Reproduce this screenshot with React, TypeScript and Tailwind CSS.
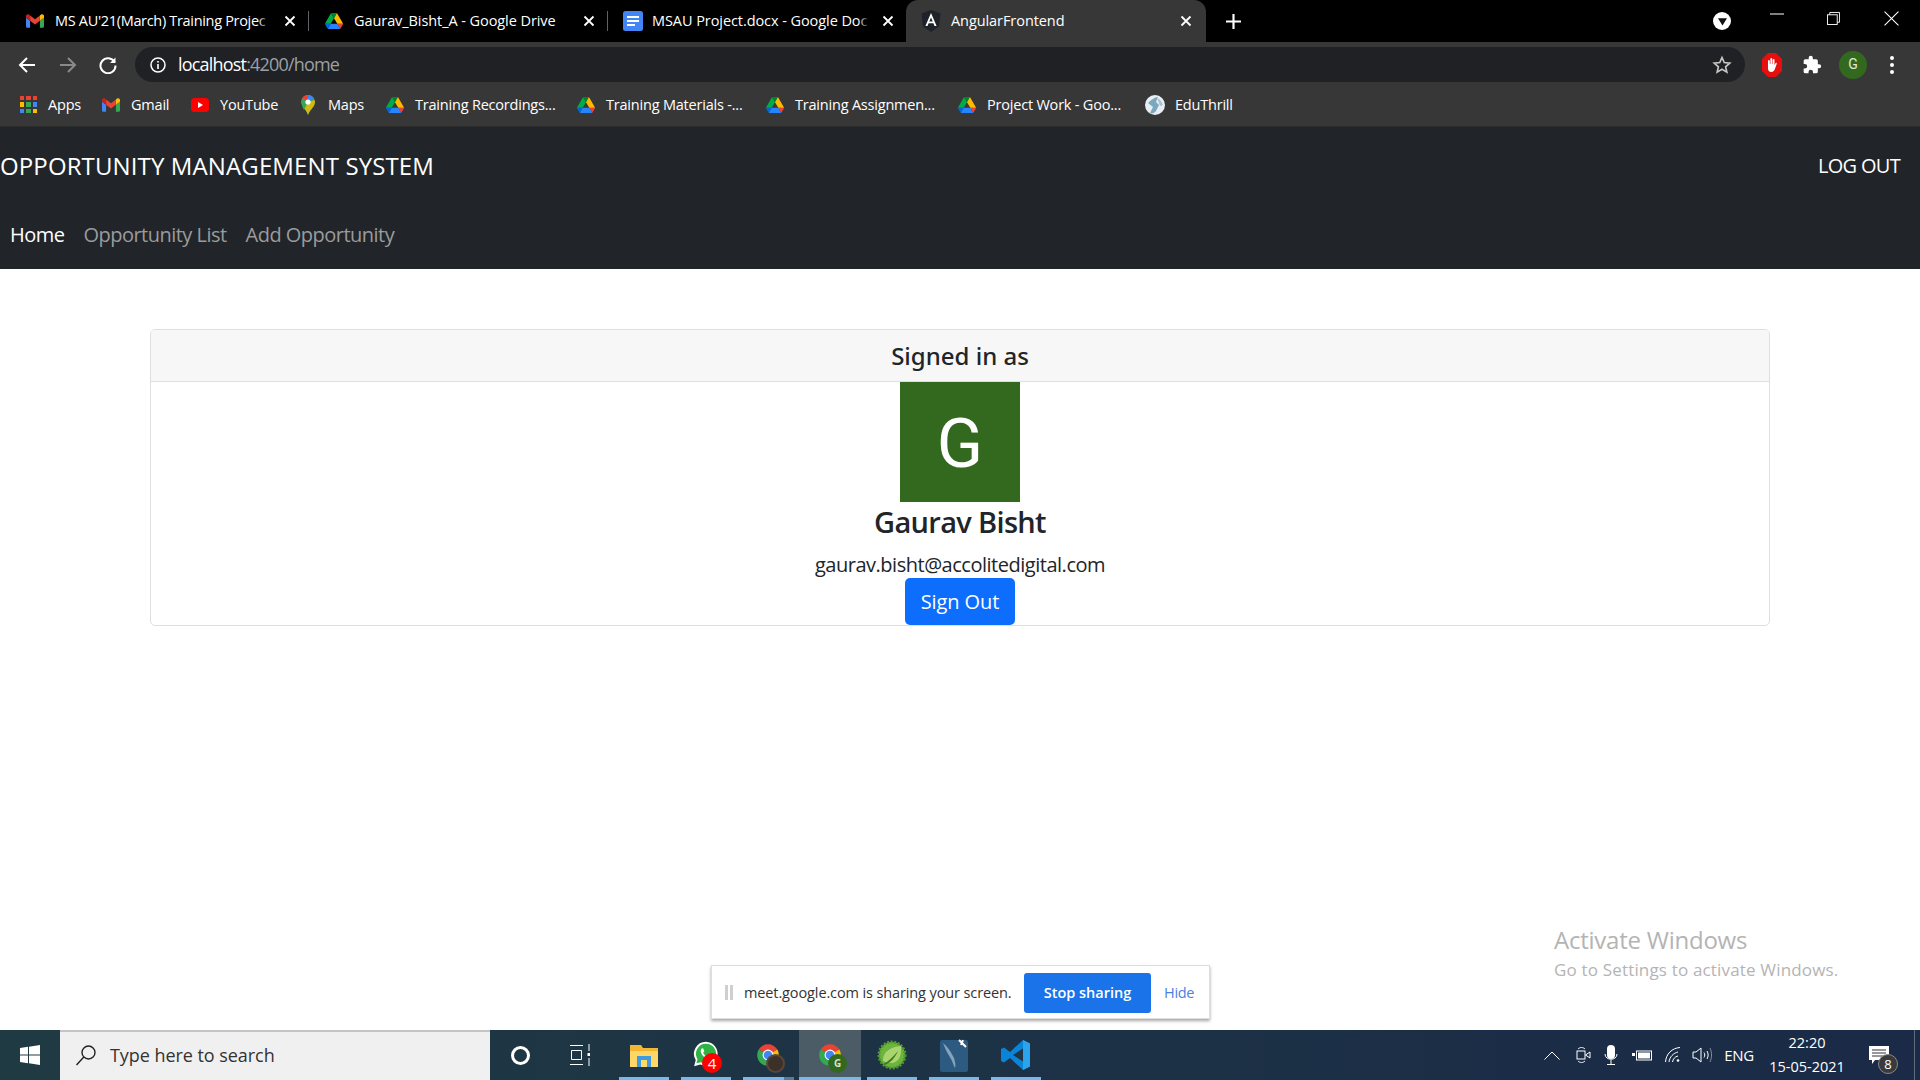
import React from "react";

const F = "font-['Open_Sans','Noto_Sans',sans-serif]";

function Drive({ className = "w-[18px] h-[16px]" }: { className?: string }) {
  return (
    <svg viewBox="0 0 87.3 78" className={className}>
      <path d="m6.6 66.85 3.85 6.65c.8 1.4 1.95 2.5 3.3 3.3l13.75-23.8h-27.5c0 1.55.4 3.1 1.2 4.5z" fill="#0066da" />
      <path d="m43.65 25-13.75-23.8c-1.35.8-2.5 1.9-3.3 3.3l-25.4 44a9.06 9.06 0 0 0 -1.2 4.5h27.5z" fill="#00ac47" />
      <path d="m73.55 76.8c1.35-.8 2.5-1.9 3.3-3.3l1.6-2.75 7.65-13.25c.8-1.4 1.2-2.95 1.2-4.5h-27.502l5.852 11.5z" fill="#ea4335" />
      <path d="m43.65 25 13.75-23.8c-1.35-.8-2.9-1.2-4.5-1.2h-18.5c-1.6 0-3.15.45-4.5 1.2z" fill="#00832d" />
      <path d="m59.8 53h-32.3l-13.75 23.8c1.35.8 2.9 1.2 4.5 1.2h50.8c1.6 0 3.15-.45 4.5-1.2z" fill="#2684fc" />
      <path d="m73.4 26.5-12.7-22c-.8-1.4-1.95-2.5-3.3-3.3l-13.75 23.8 16.15 28h27.45c0-1.55-.4-3.1-1.2-4.5z" fill="#ffba00" />
    </svg>
  );
}

function Gmail({ className = "w-[18px] h-[14px]" }: { className?: string }) {
  return (
    <svg viewBox="52 42 88 66" className={className}>
      <path fill="#4285f4" d="M58 108h14V74L52 59v43c0 3.32 2.69 6 6 6" />
      <path fill="#34a853" d="M120 108h14c3.32 0 6-2.69 6-6V59l-20 15" />
      <path fill="#fbbc04" d="M120 48v26l20-15v-8c0-7.42-8.47-11.65-14.4-7.2" />
      <path fill="#ea4335" d="M72 74V48l24 18 24-18v26L96 92" />
      <path fill="#c5221f" d="M52 51v8l20 15V48l-5.6-4.2c-5.94-4.45-14.4-.22-14.4 7.2" />
    </svg>
  );
}

function Docs() {
  return (
    <svg viewBox="0 0 20 20" className="w-5 h-5">
      <rect x="0" y="0" width="20" height="20" rx="2.5" fill="#4285f4" />
      <rect x="4" y="5" width="12" height="2" fill="#fff" />
      <rect x="4" y="9" width="12" height="2" fill="#fff" />
      <rect x="4" y="13" width="8" height="2" fill="#fff" />
    </svg>
  );
}

function Angular() {
  return (
    <svg viewBox="0 0 20 22" className="w-5 h-[22px]">
      <path d="M10 0 19.5 3.4 18 16.6 10 22 2 16.6.5 3.4z" fill="#1e2229" />
      <path d="M10 3 4.4 16h2.1l1.1-2.8h4.8l1.1 2.8h2.1L10 3zm0 4.6 1.7 4H8.3l1.7-4z" fill="#fff" />
    </svg>
  );
}

function Chrome({ badge }: { badge?: "photo" | "g" }) {
  return (
    <div className="relative w-[26px] h-[26px]">
      <svg viewBox="0 0 48 48" className="w-[26px] h-[26px]">
        <path d="M24 24 6.7 14A20 20 0 0 1 41.3 14z" fill="#ea4335" />
        <path d="M24 24 6.7 14A20 20 0 0 0 24 44z" fill="#34a853" />
        <path d="M24 24 41.3 14A20 20 0 0 1 24 44z" fill="#fbbc04" />
        <circle cx="24" cy="24" r="10" fill="#fff" />
        <circle cx="24" cy="24" r="8" fill="#4285f4" />
      </svg>
      {badge === "photo" && <div className="absolute left-[11px] top-[12px] w-[19px] h-[19px] rounded-full bg-[#3d3029] border-2 border-[#5a4638]" />}
      {badge === "g" && (
        <div className={`absolute left-[11px] top-[12px] w-[19px] h-[19px] rounded-full bg-[#33691e] flex items-center justify-center text-[10px] font-bold text-[#d5e3cc] ${F}`}>G</div>
      )}
    </div>
  );
}

const X = ({ c = "" }: { c?: string }) => (
  <svg viewBox="0 0 12 12" className={`w-3 h-3 ${c}`}>
    <path d="M1.5 1.5l9 9M10.5 1.5l-9 9" stroke="#fff" strokeWidth="1.8" />
  </svg>
);

const tabText = "whitespace-nowrap text-[14.5px] text-white";

function TabBar() {
  return (
    <div className="h-[42px] bg-black flex items-stretch shrink-0">
      <div className="w-[309px] flex items-center pl-[26px] relative">
        <Gmail />
        <span className={`ml-[11px] w-[215px] tracking-[-0.022em] ${tabText}`}>MS AU'21(March) Training Projec</span>
        <span className="absolute left-[258px] top-[9px] w-[12px] h-6 bg-linear-to-r from-transparent to-black" />
        <X c="ml-[14px]" />
        <span className="absolute right-0 top-[11px] h-[20px] w-px bg-[#5f6368]" />
      </div>
      <div className="w-[299px] flex items-center pl-[16px] relative">
        <Drive />
        <span className={`ml-[11px] w-[222px] tracking-[-0.005em] ${tabText}`}>Gaurav_Bisht_A - Google Drive</span>
        <X c="ml-[7px]" />
        <span className="absolute right-0 top-[11px] h-[20px] w-px bg-[#5f6368]" />
      </div>
      <div className="w-[298px] flex items-center pl-[15px] relative">
        <Docs />
        <span className={`ml-[9px] w-[218px] tracking-[-0.005em] ${tabText}`}>MSAU Project.docx - Google Doc</span>
        <span className="absolute left-[250px] top-[9px] w-[12px] h-6 bg-linear-to-r from-transparent to-black" />
        <X c="ml-[12px]" />
      </div>
      <div className="w-[300px] bg-[#373737] rounded-t-[12px] flex items-center pl-[15px] relative">
        <Angular />
        <span className={`ml-[10px] w-[229px] tracking-[-0.005em] ${tabText}`}>AngularFrontend</span>
        <X />
      </div>
      <div className="ml-[20px] flex items-center">
        <svg viewBox="0 0 14 14" className="w-[15px] h-[15px]"><path d="M7 0v14M0 7h14" stroke="#fff" strokeWidth="2" /></svg>
      </div>
      <div className="ml-auto flex items-center">
        <div className="w-[18px] h-[18px] rounded-full bg-white flex items-center justify-center mr-[39px]">
          <svg viewBox="0 0 10 10" className="w-[9px] h-[9px]"><path d="M0 1.5h10L5 9.5z" fill="#111" /></svg>
        </div>
        <svg viewBox="0 0 14 2" className="w-[14px] h-[2px] mr-[43px] -mt-[14px]"><path d="M0 1h14" stroke="#fff" strokeWidth="1" /></svg>
        <svg viewBox="0 0 14 14" className="w-[13px] h-[15px] mr-[44px] -mt-[6px]" fill="none" stroke="#fff" strokeWidth="1"><path d="M3 3V.5h10.5V11H11" /><rect x=".5" y="3" width="10.5" height="10.5" /></svg>
        <svg viewBox="0 0 14 14" className="w-[15px] h-[15px] mr-[21px] -mt-[6px]" fill="none" stroke="#fff" strokeWidth="1"><path d="M.5.5l13 13M13.5.5l-13 13" /></svg>
      </div>
    </div>
  );
}

function Toolbar() {
  return (
    <div className="h-[40px] bg-[#373737] flex items-start shrink-0">
      <div className="w-[135px] h-[35px] mt-[5px] flex items-center pl-[18px]">
        <svg viewBox="0 0 18 18" className="w-[18px] h-[18px]" fill="none" stroke="#fff" strokeWidth="2"><path d="M17 9H2M9 2 2 9l7 7" /></svg>
        <svg viewBox="0 0 18 18" className="w-[18px] h-[18px] ml-[23px]" fill="none" stroke="#8a8a8a" strokeWidth="2"><path d="M1 9h15M9 2l7 7-7 7" /></svg>
        <svg viewBox="0 0 18 18" className="w-[18px] h-[18px] ml-[22px]" fill="none" stroke="#fff" strokeWidth="2"><path d="M15.5 6A7.5 7.5 0 1 0 16.500 9.500" /><path d="M16.500 1.500v5.500h-5.500" fill="#fff" stroke="none" /></svg>
      </div>
      <div className="w-[1610px] h-[35px] mt-[5px] rounded-full bg-[#202124] flex items-center pl-[15px] pr-[13px]">
        <svg viewBox="0 0 16 16" className="w-[16px] h-[16px]" fill="none"><circle cx="8" cy="8" r="7" stroke="#fff" strokeWidth="1.500" /><rect x="7.200" y="7" width="1.600" height="5" fill="#fff" /><rect x="7.200" y="4" width="1.600" height="1.600" fill="#fff" /></svg>
        <span className="ml-[12px] text-[18px] tracking-[-0.045em] text-white">localhost<span className="text-[#9aa0a6]">:4200/home</span></span>
        <svg viewBox="0 0 24 24" className="w-[20px] h-[20px] ml-auto" fill="none" stroke="#c4c7c5" strokeWidth="2"><path d="M12 3l2.700 6.100 6.600.6-5 4.400 1.500 6.500L12 17.200l-5.800 3.400 1.500-6.500-5-4.400 6.600-.6z" /></svg>
      </div>
      <div className="flex-1 h-[35px] mt-[5px] flex items-center">
        <svg viewBox="0 0 20 24" className="w-[20px] h-[24px] ml-[17px]"><path d="M6 0h8l6 6v12l-6 6H6l-6-6V6z" fill="#e60f0f" /><path d="M6 13V7.500a1 1 0 0 1 1.800 0V11h.6V5.500a1 1 0 0 1 1.800 0V11h.5V6.500a1 1 0 0 1 1.800 0V12l1-1.800c.6-.8 1.700 0 1.200.8l-2 5.500c-.6 1.500-1.600 2.500-3.400 2.500-2.200 0-3.300-1.500-3.300-3.500z" fill="#fff" /></svg>
        <svg viewBox="0 0 24 24" className="w-[20px] h-[20px] ml-[20px]" fill="#fff"><path d="M20.500 11H19V7a2 2 0 0 0-2-2h-4V3.500a2.500 2.500 0 0 0-5 0V5H4a2 2 0 0 0-2 2v3.800h1.500a2.700 2.700 0 0 1 0 5.400H2V20a2 2 0 0 0 2 2h3.800v-1.500a2.700 2.700 0 0 1 5.400 0V22H17a2 2 0 0 0 2-2v-4h1.500a2.500 2.500 0 0 0 0-5z" /></svg>
        <div className="w-[28px] h-[28px] ml-[17px] rounded-full bg-[#33691e] flex items-center justify-center text-[14px] text-[#dfe9d8] font-['Roboto',sans-serif]">G</div>
        <svg viewBox="0 0 4 18" className="w-[4px] h-[18px] ml-[23px]" fill="#fff"><circle cx="2" cy="2" r="2" /><circle cx="2" cy="9" r="2" /><circle cx="2" cy="16" r="2" /></svg>
      </div>
    </div>
  );
}

function Bm({ icon, label, w, gap = "w-[29px]" }: { icon: React.ReactNode; label: string; w: string; gap?: string }) {
  return (
    <div className={`flex items-center shrink-0 ${w}`}>
      <span className={`flex items-center ${gap}`}>{icon}</span>
      <span className="text-[14.5px] tracking-[-0.014em] text-white whitespace-nowrap">{label}</span>
    </div>
  );
}

function Bookmarks() {
  const apps = ["#ea4335", "#ea4335", "#ea4335", "#fbbc04", "#34a853", "#4285f4", "#4285f4", "#34a853", "#fbbc04"];
  return (
    <div className="h-[45px] bg-[#373737] flex items-center shrink-0 pl-[20px] pt-[1px] border-b border-[#2c2c2c]">
      <Bm w="w-[82px]" gap="w-[28px]" label="Apps" icon={
        <div className="grid grid-cols-3 gap-[2px] w-[17px]">
          {apps.map((c, i) => <span key={i} className="w-[4.300px] h-[4.300px]" style={{ background: c }} />)}
        </div>
      } />
      <Bm w="w-[89px]" label="Gmail" icon={<Gmail />} />
      <Bm w="w-[110px]" label="YouTube" icon={
        <svg viewBox="0 0 18 14" className="w-[18px] h-[14px]"><rect width="18" height="14" rx="3.500" fill="#f00" /><path d="M7 4l5 3-5 3z" fill="#fff" /></svg>
      } />
      <Bm w="w-[85px]" gap="w-[27px]" label="Maps" icon={
        <svg viewBox="0 0 14 20" className="w-[14px] h-[20px]"><path d="M7 0a7 7 0 0 0-7 7c0 4.500 5 7 7 13 2-6 7-8.500 7-13a7 7 0 0 0-7-7z" fill="#34a853" /><path d="M7 0a7 7 0 0 1 6 3.500L7 7z" fill="#4285f4" /><path d="M1 3.500A7 7 0 0 1 7 0v7z" fill="#ea4335" /><path d="M13.500 5 7 7 2 12c2 2.500 4 4 5 8 1.500-5 7-8 7-13z" fill="#fbbc04" opacity=".8" /><path d="M1 11 7 7 3 15z" fill="#34a853" /><circle cx="7" cy="7" r="2.600" fill="#fff" /></svg>
      } />
      <Bm w="w-[191px]" label="Training Recordings..." icon={<Drive />} />
      <Bm w="w-[189px]" label="Training Materials -..." icon={<Drive />} />
      <Bm w="w-[192px]" label="Training Assignmen..." icon={<Drive />} />
      <Bm w="w-[187px]" label="Project Work - Goo..." icon={<Drive />} />
      <Bm w="w-[100px]" gap="w-[30px]" label="EduThrill" icon={
        <svg viewBox="0 0 20 20" className="w-[20px] h-[20px]"><circle cx="10" cy="10" r="10" fill="#e8eef2" /><path d="M3 8c3-3 7-6 10-6l-2 5 3 3-3 6c-1 2-5 3-6 2l3-6z" fill="#7ba7bf" /><path d="M12 3c3 1 5 4 6 7l-3 1z" fill="#a9c4d4" /></svg>
      } />
    </div>
  );
}

function Navbar() {
  return (
    <nav className="h-[142px] bg-[#212529] shrink-0 flex flex-col">
      <div className="h-[57px] flex items-end justify-between pr-[20px]">
        <span className="text-[24px] leading-[36px] tracking-[0.005em] text-white">OPPORTUNITY MANAGEMENT SYSTEM</span>
        <span className="text-[20px] leading-[36px] tracking-[-0.035em] text-white">LOG OUT</span>
      </div>
      <div className="flex gap-[19px] pl-[10px] mt-[35px] text-[20px] leading-[32px] tracking-[-0.026em]">
        <span className="text-white">Home</span>
        <span className="text-[#9a9b9d]">Opportunity List</span>
        <span className="text-[#9a9b9d]">Add Opportunity</span>
      </div>
    </nav>
  );
}

function Card() {
  return (
    <main className="flex-1 bg-white pt-[60px] px-[150px] text-[#212529]">
      <div className="border border-[#dfdfdf] rounded-[5px] overflow-hidden h-[297px]">
        <div className="h-[52px] bg-[#f7f7f7] border-b border-[#dfdfdf] flex items-center justify-center text-[24px] font-medium font-['Noto_Sans',sans-serif]">Signed in as</div>
        <div className="flex flex-col items-center">
          <div className="w-[120px] h-[120px] pt-[4px] bg-[#33691e] flex items-center justify-center text-white text-[68px] font-['Roboto',sans-serif]">G</div>
          <div className="h-[39px] flex items-center text-[29px] font-semibold tracking-[-0.023em] leading-none">Gaurav Bisht</div>
          <div className="h-[37px] pt-[10px] flex items-center text-[20px] tracking-[-0.024em]">gaurav.bisht@accolitedigital.com</div>
          <button className="w-[110px] h-[47px] rounded-[5px] bg-[#0d6efd] text-white text-[20px] tracking-[-0.005em]">Sign Out</button>
        </div>
      </div>
    </main>
  );
}

function Slot({ children, active, line, stack, narrow }: { children: React.ReactNode; active?: boolean; line?: boolean; stack?: boolean; narrow?: boolean }) {
  return (
    <div className={`${narrow ? "w-[61px]" : "w-[62px]"} h-[50px] relative flex items-center justify-center ${active ? "bg-[#4b5c66]" : ""}`}>
      {children}
      {line && <span className={`absolute bottom-0 h-[3px] bg-[#76b9ed] ${active ? "left-0 right-0" : "left-[6px] right-[6px]"}`} />}
      {stack && <span className="absolute bottom-0 right-[5px] h-[3px] w-[10px] bg-[#4f7f9f]" />}
    </div>
  );
}

function Taskbar() {
  return (
    <div className="h-[50px] shrink-0 flex items-stretch bg-linear-to-r from-[#203a43] to-[#1a2a47]">
      <div className="w-[60px] flex items-center justify-center">
        <svg viewBox="0 0 20 20" className="w-[20px] h-[20px]" fill="#fff"><path d="M0 3l8-1.200v7.700H0zM9 1.700 20 0v9.500H9zM0 10.500h8v7.700L0 17zM9 10.500h11V20L9 18.300z" /></svg>
      </div>
      <div className="w-[430px] bg-[#f0f0f0] border-t-2 border-[#c4c4c4] flex items-center pl-[15px] pb-[2px]">
        <svg viewBox="0 0 22 22" className="w-[22px] h-[22px]" fill="none" stroke="#222" strokeWidth="1.400"><circle cx="13.500" cy="8.500" r="6.500" /><path d="M8.800 13 1.500 21" /></svg>
        <span className="ml-[13px] text-[18px] tracking-[-0.003em] text-[#333]">Type here to search</span>
      </div>
      <Slot narrow><span className="w-[19px] h-[19px] rounded-full border-[3px] border-white" /></Slot>
      <Slot>
        <svg viewBox="0 0 20 24" className="w-[20px] h-[24px] -ml-[4px]" fill="none" stroke="#fff" strokeWidth="1"><path d="M0 2.500h13M0 21.500h13M1.500 7.500h10v9h-10z" /><path d="M19 1v7M19 15v8" /><rect x="17.500" y="10" width="3" height="3" fill="#fff" stroke="none" /></svg>
      </Slot>
      <Slot line>
        <svg viewBox="0 0 28 24" className="w-[28px] h-[24px]"><path d="M0 2h11l2 3h15v19H0z" fill="#f2b632" /><rect x="0" y="8" width="28" height="16" fill="#ffd766" /><rect x="7" y="13" width="14" height="11" fill="#3f9be0" /><rect x="11" y="17" width="6" height="7" fill="#ffd766" /></svg>
      </Slot>
      <Slot line>
        <div className="relative w-[28px] h-[30px]">
          <svg viewBox="0 0 24 24" className="w-[28px] h-[28px]">
            <path d="M12 1.500a10.300 10.300 0 0 0-8.800 15.700L1.800 22.500l5.400-1.400A10.300 10.300 0 1 0 12 1.500z" fill="#fff" />
            <path d="M12 3.200a8.600 8.600 0 0 0-7.300 13.200l-.9 3.600 3.700-.9A8.600 8.600 0 1 0 12 3.200z" fill="#2fb344" />
            <path d="M8.700 7.200c-.4 0-1 .5-1.200 1.300-.4 1.900 1 4.100 2.700 5.800s3.900 2.900 5.600 2.400c.8-.3 1.300-.9 1.300-1.500l-.1-.8-2.500-1.200-1.200 1.400c-1.700-.7-3-2-3.800-3.800l1.100-1.200-1.100-2.500z" fill="#fff" />
          </svg>
          <span className={`absolute left-[10px] top-[13px] w-[20px] h-[20px] rounded-full bg-[#f00] text-white text-[15px] leading-[20px] text-center ${F}`}>4</span>
        </div>
      </Slot>
      <Slot line stack><Chrome badge="photo" /></Slot>
      <Slot line active><Chrome badge="g" /></Slot>
      <Slot line>
        <svg viewBox="0 0 30 30" className="w-[30px] h-[30px]">
          <circle cx="15" cy="15" r="13" fill="#6db33f" stroke="#4f9a2a" strokeWidth="3" strokeDasharray="2 1.500" />
          <path d="M6 21C6 11 14 7 24 6c1 9-2 17-10 17-3 0-5-1-8-2z" fill="#a8d56e" />
          <path d="M6 24c5-2 10-7 15-13-3 7-8 12-13 14z" fill="#3c7a1e" />
        </svg>
      </Slot>
      <Slot line>
        <svg viewBox="0 0 28 34" className="w-[28px] h-[34px]">
          <rect x="0" y="2" width="28" height="32" rx="2" fill="#2c5a80" />
          <path d="M3 5c5 4 8 9 11 15 1 4 2 7 1 10-2-3-2-6-4-9-3-5-6-10-8-16z" fill="#cfe0ec" opacity=".55" />
          <path d="M19 2l7 7M23 2l-2 5" stroke="#fff" strokeWidth="2" />
        </svg>
      </Slot>
      <Slot line>
        <svg viewBox="0 0 32 32" className="w-[32px] h-[32px]">
          <path d="M23 1 30 4.500v23L23 31 10 19l-6 4.500-3-1.500v-12l3-1.500 6 4.500z" fill="#0a84d6" />
          <path d="M23 9.500 13 16l10 6.500z" fill="#1f3445" />
          <path d="M23 1 30 4.500v23L23 31z" fill="#2ba4ee" />
        </svg>
      </Slot>
      <div className="flex-1 flex items-center justify-end text-white">
        <svg viewBox="0 0 16 9" className="w-[16px] h-[9px] mr-[16px]" fill="none" stroke="#fff" strokeWidth="1"><path d="M.5 8.500 8 1l7.500 7.500" /></svg>
        <svg viewBox="0 0 15 18" className="w-[15px] h-[18px] mr-[13px]" fill="none" stroke="#fff" strokeWidth="1"><path d="M2 3c2-2 5-2 7 0M2 15c2 2 5 2 7 0" /><rect x="1" y="5" width="8" height="8" /><path d="M9.500 9 14 6v6z" /></svg>
        <svg viewBox="0 0 14 20" className="w-[14px] h-[20px] mr-[14px]"><rect x="3" y="0" width="8" height="14" rx="4" fill="#fff" /><path d="M1 9c0 7 12 7 12 0M7 15v4M3 19.500h8" fill="none" stroke="#fff" /></svg>
        <svg viewBox="0 0 20 12" className="w-[20px] h-[12px] mr-[13px]"><rect x="4.500" y="2" width="15" height="9" fill="none" stroke="#fff" /><rect x="6" y="3.500" width="12" height="6" fill="#fff" /><path d="M0 4h3v3H0z" fill="#fff" /></svg>
        <svg viewBox="0 0 16 16" className="w-[16px] h-[16px] mr-[11px]" fill="none" stroke="#fff" strokeWidth="1"><path d="M.5 15C1 7 7 1 15 .5M4 15c.5-5 4.500-9 9-10M7.500 15c.5-3 2.500-5.500 5.500-6" /><circle cx="13" cy="13.500" r="1.300" fill="#fff" stroke="none" /></svg>
        <svg viewBox="0 0 20 18" className="w-[20px] h-[18px] mr-[12px]" fill="none" stroke="#fff" strokeWidth="1"><path d="M1 6h3l5-4v14l-5-4H1zM12 6.500c1 1.500 1 3.500 0 5M15 5c1.500 2.500 1.500 5.500 0 8" /><path d="M18 2c2 4 2 10 0 14" stroke="#8a8f99" /></svg>
        <span className="text-[15px] tracking-[-0.015em] mr-[13px]">ENG</span>
        <div className="w-[80px] text-center text-[14.5px] leading-[24px] mr-[22px]">
          <div>22:20</div>
          <div>15-05-2021</div>
        </div>
        <div className="relative w-[20px] h-[18px] mr-[25px]">
          <svg viewBox="0 0 20 18" className="w-[20px] h-[18px]"><path d="M0 0h20v14H6l-3 4v-4H0z" fill="#fff" /><path d="M3 4h14M3 7h14M3 10h14" stroke="#333" strokeWidth="1" /></svg>
          <span className={`absolute left-[9px] top-[8px] w-[20px] h-[20px] rounded-full bg-[#3a3a3a] border border-[#888] text-white text-[13px] leading-[18px] text-center ${F}`}>8</span>
        </div>
        <span className="w-px h-[50px] bg-[#5f6b78] mr-[5px]" />
      </div>
    </div>
  );
}

export default function App() {
  return (
    <div className={`relative w-[1920px] h-[1080px] overflow-hidden flex flex-col bg-white ${F}`}>
      <TabBar />
      <Toolbar />
      <Bookmarks />
      <Navbar />
      <Card />
      <Taskbar />
      <div className="absolute left-[1554px] top-[924px] text-[#b4b4b4]">
        <div className="text-[24px] leading-[32px] tracking-[-0.01em]">Activate Windows</div>
        <div className="text-[17px] leading-[27px] tracking-[0.01em]">Go to Settings to activate Windows.</div>
      </div>
      <div className="absolute left-[711px] top-[965px] w-[499px] h-[54px] bg-white border border-[#dedede] shadow-[0_2px_3px_rgba(0,0,0,0.35)] flex items-center pl-[13px] pt-[1px]">
        <span className="w-[3px] h-[15px] bg-[#cfcfcf]" />
        <span className="w-[3px] h-[15px] bg-[#cfcfcf] ml-[2px]" />
        <span className="ml-[11px] text-[14.5px] tracking-[-0.008em] text-[#333] whitespace-nowrap w-[280px]">meet.google.com is sharing your screen.</span>
        <button className="w-[127px] h-[40px] rounded-[3px] bg-[#1a73e8] text-white text-[14.5px] font-semibold">Stop sharing</button>
        <span className="ml-[13px] text-[14.5px] tracking-[-0.02em] text-[#4a7fe0]">Hide</span>
      </div>
    </div>
  );
}
